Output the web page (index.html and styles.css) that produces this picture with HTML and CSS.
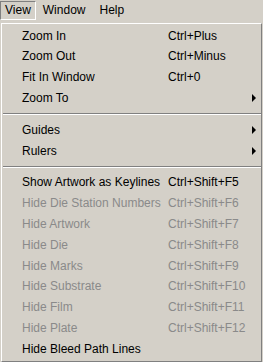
FILE: index.html
```html
<!DOCTYPE html>
<html>
<head>
<meta charset="utf-8">
<link rel="stylesheet" href="styles.css">
</head>
<body>
<div class="menubar">
  <span class="mtitle active">View</span>
  <span class="mtitle">Window</span>
  <span class="mtitle">Help</span>
</div>
<div class="popup">
  <div class="item"><span class="label">Zoom In</span><span class="key">Ctrl+Plus</span></div>
  <div class="item"><span class="label">Zoom Out</span><span class="key">Ctrl+Minus</span></div>
  <div class="item"><span class="label">Fit In Window</span><span class="key">Ctrl+0</span></div>
  <div class="item"><span class="label">Zoom To</span><span class="arrow"></span></div>
  <div class="sep"></div>
  <div class="item"><span class="label">Guides</span><span class="arrow"></span></div>
  <div class="item"><span class="label">Rulers</span><span class="arrow"></span></div>
  <div class="sep"></div>
  <div class="item"><span class="label">Show Artwork as Keylines</span><span class="key">Ctrl+Shift+F5</span></div>
  <div class="item dis"><span class="label">Hide Die Station Numbers</span><span class="key">Ctrl+Shift+F6</span></div>
  <div class="item dis"><span class="label">Hide Artwork</span><span class="key">Ctrl+Shift+F7</span></div>
  <div class="item dis"><span class="label">Hide Die</span><span class="key">Ctrl+Shift+F8</span></div>
  <div class="item dis"><span class="label">Hide Marks</span><span class="key">Ctrl+Shift+F9</span></div>
  <div class="item dis"><span class="label">Hide Substrate</span><span class="key">Ctrl+Shift+F10</span></div>
  <div class="item dis"><span class="label">Hide Film</span><span class="key">Ctrl+Shift+F11</span></div>
  <div class="item dis"><span class="label">Hide Plate</span><span class="key">Ctrl+Shift+F12</span></div>
  <div class="item"><span class="label">Hide Bleed Path Lines</span></div>
</div>
</body>
</html>
```
FILE: styles.css
```css
html, body {
  margin: 0;
  padding: 0;
  background: #d4d0c8;
  font-family: "Liberation Sans", Arial, sans-serif;
  font-size: 12px;
  color: #000;
}
.menubar {
  height: 23px;
  display: flex;
  align-items: flex-start;
}
.mtitle {
  height: 17px;
  line-height: 17px;
  margin-top: 1px;
  padding: 0 6px;
  border: 1px solid transparent;
}
.mtitle.active {
  border-color: #808080 #ffffff #ffffff #808080;
  padding: 0 4px;
}
.popup {
  margin-left: 1px;
  width: 259px;
  height: 335px;
  border-top: 1px solid #ffffff;
  border-left: 1px solid #ffffff;
  border-right: 1px solid #808080;
  border-bottom: 1px solid #808080;
  padding-top: 1.6px;
}
.item {
  height: 20.8px;
  line-height: 20.8px;
  display: flex;
  align-items: center;
  padding-left: 20px;
  white-space: nowrap;
}
.label {
  width: 146px;
  flex: none;
}
.key {
  flex: none;
}
.dis {
  color: #8a8a8a;
}
.arrow {
  margin-left: 84px;
  width: 0;
  height: 0;
  border-top: 4px solid transparent;
  border-bottom: 4px solid transparent;
  border-left: 4px solid #000;
}
.sep {
  height: 11px;
  display: flex;
  flex-direction: column;
  justify-content: center;
  padding-left: 1px;
}
.sep::before {
  content: "";
  display: block;
  height: 1px;
  background: #808080;
  border-bottom: 1px solid #ffffff;
}
```
